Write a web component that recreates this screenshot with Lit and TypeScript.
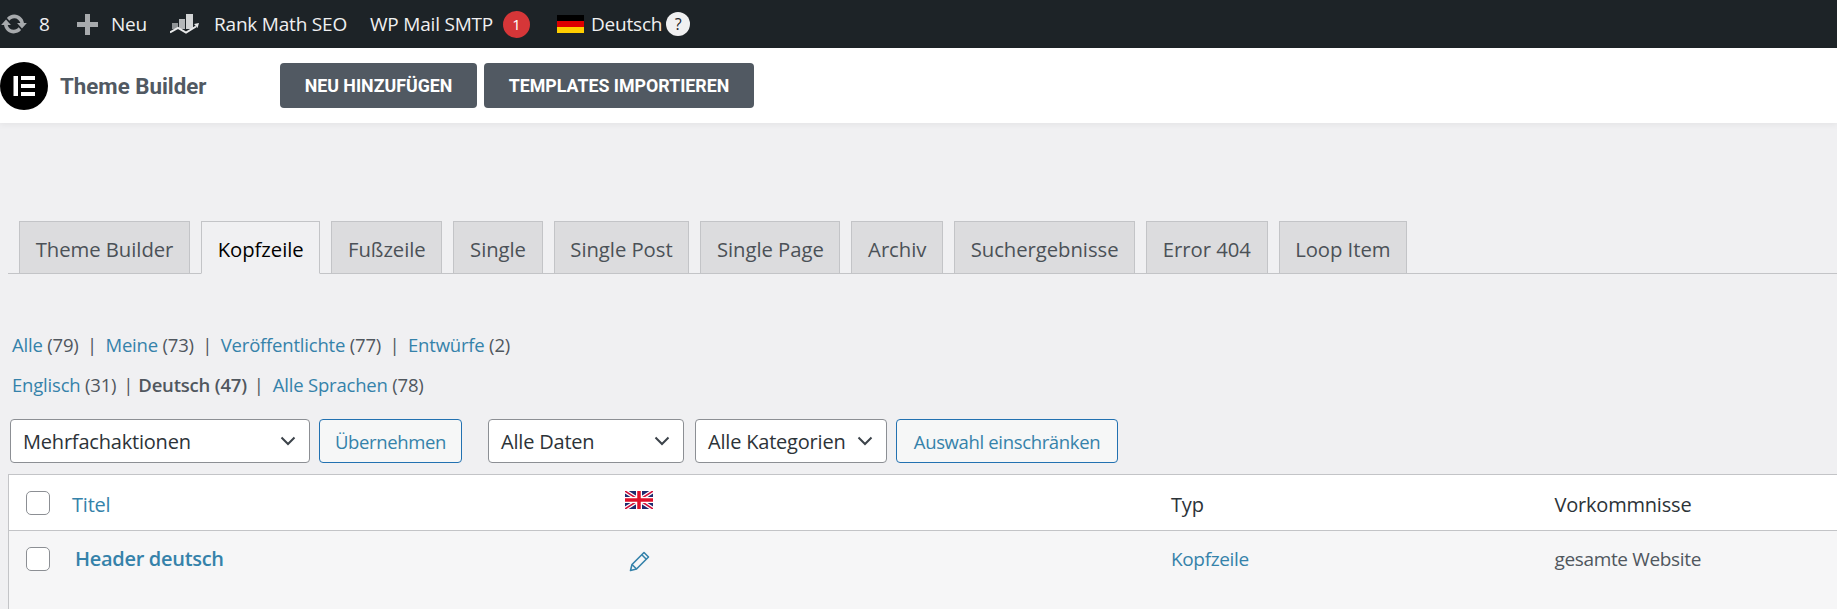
import { LitElement, html, css, svg } from "lit";
import { customElement } from "lit/decorators.js";

const TABS = ["Theme Builder", "Kopfzeile", "Fußzeile", "Single", "Single Post", "Single Page", "Archiv", "Suchergebnisse", "Error 404", "Loop Item"];
const chevron = html`<svg class="chev" width="16" height="10" viewBox="0 0 16 10"><path d="M1.500 1.500l6.500 6.500 6.500-6.500" fill="none" stroke="#3c434a" stroke-width="2"/></svg>`;

@customElement("app-root")
export class AppRoot extends LitElement {
  static styles = css`
    :host { display: block; height: 609px; overflow: hidden; background: #f0f0f2; color: #50575e;
      font-family: "Open Sans", "Noto Sans", sans-serif; font-size: 18.5px; letter-spacing: -0.2px; }
    a { color: #3582aa; text-decoration: none; }
    .adminbar { height: 48px; background: #1d2327; color: #f0f0f1; display: flex; align-items: center; font-size: 19px; letter-spacing: -0.2px; }
    .adminbar svg { display: block; flex: none; }
    .count { margin-left: 11px; width: 10px; }
    .i-plus { margin-left: 28px; }
    .neu { margin-left: 13px; width: 35px; }
    .i-chart { margin-left: 24px; }
    .rm { margin-left: 15px; width: 133px; white-space: nowrap; }
    .smtp { margin-left: 23px; width: 125px; white-space: nowrap; }
    .badge { margin-left: 8px; width: 27px; height: 27px; border-radius: 50%; background: #d63638; color: #fff; font-size: 15px;
      display: flex; align-items: center; justify-content: center; }
    .i-de { margin-left: 27px; }
    .de { margin-left: 7px; width: 69px; white-space: nowrap; }
    .help { margin-left: 6px; width: 24px; height: 24px; border-radius: 50%; background: #f0f0f1; color: #1d2327; font-size: 16px;
      display: flex; align-items: center; justify-content: center; }
    .header { height: 75px; background: #fff; display: flex; align-items: center; box-shadow: 0 2px 6px rgba(0,0,0,.05);
      font-family: Roboto, sans-serif; letter-spacing: 0; }
    .logo { flex: none; display: block; }
    .title { margin-left: 12px; width: 220px; font-size: 22.300px; font-weight: 700; color: #515962; }
    .hbtn { height: 45px; box-sizing: border-box; background: #515962; color: #fff; border-radius: 4px; font-weight: 700; font-size: 17.8px;
      display: flex; align-items: center; justify-content: center; }
    .hbtn + .hbtn { margin-left: 7px; }
    .hb1 { width: 197px; }
    .hb2 { width: 270px; }
    .main { padding: 98px 0 0 8px; }
    .tabs { display: flex; height: 53px; box-sizing: border-box; border-bottom: 1px solid #c3c4c7; padding-left: 11px; gap: 11px; }
    .tab { height: 53px; box-sizing: border-box; padding: 2px 15.700px 0; border: 1px solid #c3c4c7; background: #dcdcde; display: flex; align-items: center;
      font-size: 20.300px; font-weight: 500; letter-spacing: -0.05px; color: #4b5157; }
    .tab.on { background: #f0f0f2; border-bottom-color: #f0f0f2; color: #000; }
    .views { display: flex; align-items: center; margin: 57px 0 0 4px; height: 27px; white-space: pre; }
    .views + .views { margin-top: 13px; }
    .sep { margin: 0 8.500px; }
    .sep.a { margin: 0 5px 0 7px; }
    .sep.b { margin: 0 9px 0 7px; }
    b { font-weight: 600; }
    .bar { display: flex; margin-left: 2px; padding-top: 21px; height: 44px; }
    .sel { box-sizing: border-box; height: 44px; background: #fff; border: 1px solid #8c8f94; border-radius: 4px; display: flex; align-items: center;
      justify-content: space-between; padding: 0 13px 0 12px; font-size: 20px; letter-spacing: -0.2px; color: #2c3338; }
    .btn { box-sizing: border-box; height: 44px; background: #f6f7f7; border: 1px solid #2271b1; border-radius: 4px; display: flex; align-items: center;
      justify-content: center; color: #3582aa; letter-spacing: -0.35px; }
    .s1 { width: 300px; } .b1 { width: 143px; margin-left: 9px; }
    .s2 { width: 196px; margin-left: 26px; } .s3 { width: 192px; margin-left: 11px; } .b2 { width: 222px; margin-left: 9px; }
    .table { margin-top: 11px; border-top: 1px solid #c3c4c7; border-left: 1px solid #c3c4c7; }
    .row { display: grid; grid-template-columns: 17px 24px 22px 553px 546px 383.5px 1fr; }
    .head { height: 56px; box-sizing: border-box; padding-top: 1px; background: #fff; border-bottom: 1px solid #c3c4c7; align-items: center; font-size: 20px; letter-spacing: -0.2px; color: #2c3338; }
    .head .txt { padding-top: 2px; }
    .body { height: 78px; background: #f6f6f7; align-items: start; padding-top: 16px; box-sizing: border-box; font-size: 19px; letter-spacing: -0.35px; line-height: 24px; }
    .cb { grid-column: 2; width: 24px; height: 24px; box-sizing: border-box; background: #fff; border: 1px solid #8c8f94; border-radius: 5px; }
    .c-title { grid-column: 4; }
    .c-flag { grid-column: 5; }
    .c-type { grid-column: 6; }
    .c-occ { grid-column: 7; white-space: nowrap; }
    .name { font-size: 20px; font-weight: 600; letter-spacing: -0.3px; padding-left: 3px; }
    .uk { display: block; align-self: start; margin-top: 15px; }
    .pen { display: block; margin: 3px 0 0 4px; }
  `;

  render() {
    return html`
      <div class="adminbar">
        <svg width="28" height="28" viewBox="0 0 20 20" fill="#a7aaad"><path d="M10.2 3.28c3.53 0 6.43 2.61 6.92 6h2.08l-3.5 4-3.5-4h2.32c-.45-1.97-2.21-3.45-4.32-3.45-1.45 0-2.73.71-3.54 1.78L4.95 5.66C6.23 4.2 8.11 3.28 10.2 3.28zm-.4 13.44c-3.52 0-6.43-2.61-6.92-6H.8l3.5-4c1.17 1.33 2.33 2.67 3.5 4H5.48c.45 1.97 2.21 3.45 4.32 3.45 1.45 0 2.73-.71 3.54-1.78l1.71 1.95c-1.28 1.46-3.15 2.38-5.25 2.38z"/></svg>
        <span class="count">8</span>
        <svg class="i-plus" width="21" height="21" viewBox="0 0 21 21" fill="#a7aaad"><path d="M8 0h5v8h8v5h-8v8H8v-8H0V8h8z"/></svg>
        <span class="neu">Neu</span>
        <svg class="i-chart" width="29" height="20" viewBox="0 0 29 20"><path fill="#8f9396" d="M2 9h6v6H2z"/><path fill="#b4b7b9" d="M9 5h6v10H9z"/><path fill="#d2d4d5" d="M16 0h7v15h-7z"/><path d="M0 18.500l8-4.500 8 4.500 10-6" fill="none" stroke="#e8e9ea" stroke-width="2"/><path d="M24 10l5-1-1.500 5z" fill="#e8e9ea"/></svg>
        <span class="rm">Rank Math SEO</span>
        <span class="smtp">WP Mail SMTP</span>
        <span class="badge">1</span>
        <svg class="i-de" width="27" height="18" viewBox="0 0 27 18"><path fill="#000" d="M0 0h27v6H0z"/><path fill="#d00" d="M0 6h27v6H0z"/><path fill="#ffce00" d="M0 12h27v6H0z"/></svg>
        <span class="de">Deutsch</span>
        <span class="help">?</span>
      </div>
      <div class="header">
        <svg class="logo" width="48" height="48" viewBox="0 0 48 48"><circle cx="24" cy="24" r="24" fill="#000"/><path fill="#fff" d="M13.500 14H18v20h-4.500zM21 14h14v4H21zM21 22h14v4H21zM21 30h14v4H21z"/></svg>
        <span class="title">Theme Builder</span>
        <span class="hbtn hb1">NEU HINZUFÜGEN</span>
        <span class="hbtn hb2">TEMPLATES IMPORTIEREN</span>
      </div>
      <div class="main">
        <div class="tabs">
          ${TABS.map((t) => html`<span class="tab ${t === "Kopfzeile" ? "on" : ""}">${t}</span>`)}
        </div>
        <div class="views"><a>Alle</a> (79)<span class="sep">|</span><a>Meine</a> (73)<span class="sep">|</span><a>Veröffentlichte</a> (77)<span class="sep">|</span><a>Entwürfe</a> (2)</div>
        <div class="views"><a>Englisch</a> (31)<span class="sep a">|</span><b>Deutsch (47)</b><span class="sep b">|</span><a>Alle Sprachen</a> (78)</div>
        <div class="bar">
          <div class="sel s1">Mehrfachaktionen ${chevron}</div>
          <div class="btn b1">Übernehmen</div>
          <div class="sel s2">Alle Daten ${chevron}</div>
          <div class="sel s3">Alle Kategorien ${chevron}</div>
          <div class="btn b2">Auswahl einschränken</div>
        </div>
        <div class="table">
          <div class="row head">
            <span class="cb"></span>
            <span class="c-title txt"><a>Titel</a></span>
            <svg class="uk c-flag" width="28" height="18" viewBox="0 0 28 18">
              ${svg`<rect width="28" height="18" fill="#1f2a6e"/><path d="M0 0l28 18M28 0L0 18" stroke="#fff" stroke-width="4"/><path d="M0 0l28 18M28 0L0 18" stroke="#d0103a" stroke-width="1.500"/><path d="M14 0v18M0 9h28" stroke="#fff" stroke-width="6"/><path d="M14 0v18M0 9h28" stroke="#e0102a" stroke-width="3.500"/>`}
            </svg>
            <span class="c-type txt">Typ</span>
            <span class="c-occ txt">Vorkommnisse</span>
          </div>
          <div class="row body">
            <span class="cb"></span>
            <a class="c-title name">Header deutsch</a>
            <svg class="pen c-flag" width="22" height="22" viewBox="0 0 22 22" fill="none" stroke="#3582aa" stroke-width="1.600" stroke-linejoin="round"><path d="M1.500 20.500L3 14.500 15 2.500 19.500 7 7.500 19z"/><path d="M12.800 4.700l4.500 4.500"/><path d="M3 14.500l4.500 4.500"/></svg>
            <a class="c-type">Kopfzeile</a>
            <span class="c-occ">gesamte Website</span>
          </div>
        </div>
      </div>
    `;
  }
}
